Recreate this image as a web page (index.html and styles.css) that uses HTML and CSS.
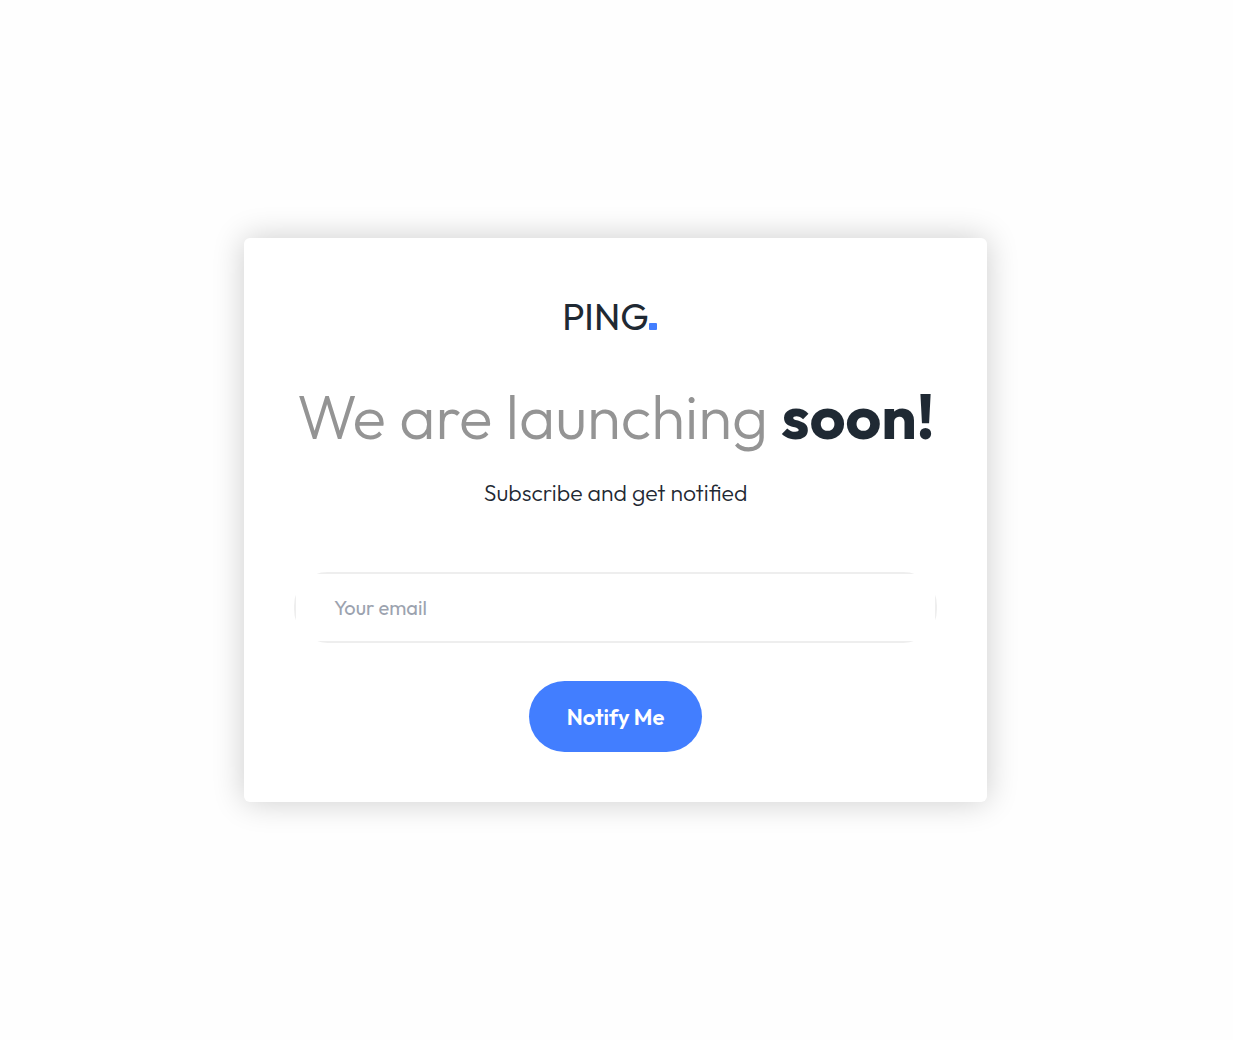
FILE: index.html
```html
<!DOCTYPE html>
<html lang="en">
<head>
  <meta charset="utf-8">
  <meta name="viewport" content="width=device-width, initial-scale=1">
  <title>Ping</title>
  <link rel="stylesheet" href="styles.css">
</head>
<body>
  <main class="card">
    <div class="logo">PING<span class="logo-dot"></span></div>
    <h1 class="title">We are launching <strong>soon!</strong></h1>
    <p class="subtitle">Subscribe and get notified</p>
    <form class="form">
      <div class="field">
        <input class="email" type="email" placeholder="Your email" aria-label="Your email">
      </div>
      <button class="submit" type="submit">Notify Me</button>
    </form>
  </main>
</body>
</html>
```

FILE: styles.css
```css
* {
  box-sizing: border-box;
}

body {
  display: flex;
  align-items: center;
  justify-content: center;
  min-height: 100vh;
  margin: 0;
  padding-right: 2px;
  background: #fefefe;
  color: #1f2933;
  font-family: Outfit, Lato, sans-serif;
}

.card {
  display: flex;
  flex-direction: column;
  align-items: center;
  width: 100%;
  max-width: 743px;
  padding: 50px;
  border-radius: 6px;
  background: #fff;
  box-shadow: 0 0 32px rgba(0, 0, 0, 0.2);
  text-align: center;
}

.logo {
  display: flex;
  align-items: baseline;
  margin-right: 12px;
  font-size: 37px;
  line-height: 58px;
}

.logo-dot {
  width: 8px;
  height: 7px;
  border-radius: 1px;
  background: #427eff;
}

.title {
  margin: 30px 0 0;
  color: #949494;
  font-size: 62px;
  font-weight: 300;
  line-height: 80px;
}

.title strong {
  color: #1f2933;
  font-weight: 700;
}

.subtitle {
  margin: 22px 0 0;
  font-size: 23px;
  font-weight: 300;
  line-height: 30px;
}

.form {
  display: flex;
  flex-direction: column;
  align-items: center;
  gap: 38px;
  width: 100%;
  margin-top: 64px;
}

.field {
  display: flex;
  width: 100%;
  border: 2px solid #eee;
  border-radius: 34px;
}

.email {
  width: 100%;
  height: 67px;
  padding: 0 38px;
  border: 0;
  outline: 0;
  background: #fff;
  color: #1f2933;
  font: 400 20px Outfit, Lato, sans-serif;
}

.email::placeholder {
  color: #9ca3af;
}

.submit {
  height: 71px;
  padding: 0 38px;
  border: 0;
  border-radius: 50px;
  background: #427eff;
  color: #fff;
  font: 600 22px Outfit, Lato, sans-serif;
  cursor: pointer;
}
```
